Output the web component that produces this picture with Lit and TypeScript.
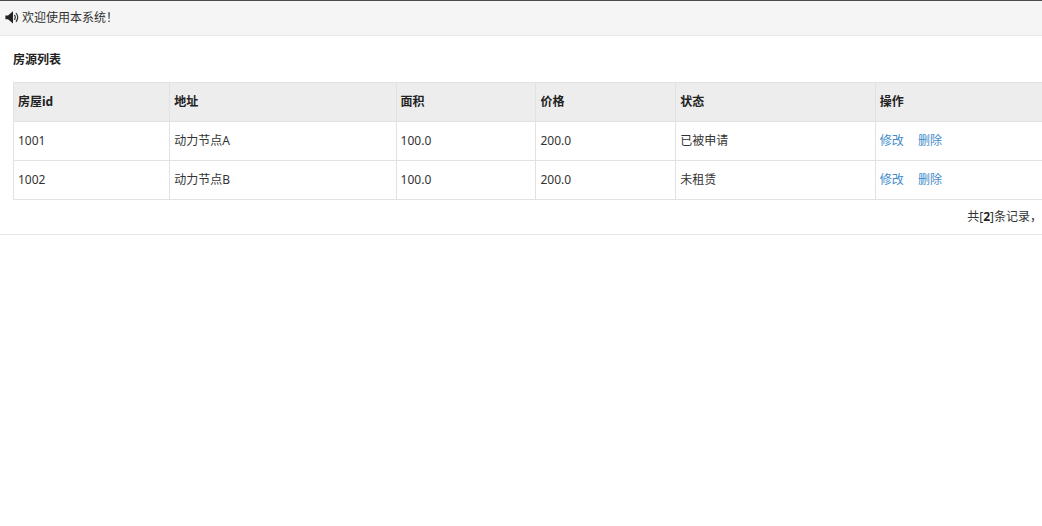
import { LitElement, html, css } from "lit";
import { customElement, state } from "lit/decorators.js";

interface House {
  id: number;
  address: string;
  area: string;
  price: string;
  status: string;
}

@customElement("app-root")
export class AppRoot extends LitElement {
  static styles = css`
    :host {
      display: block;
      overflow-x: hidden;
      background: #fff;
      color: #333;
      font: 12px/18px "Noto Sans", "Noto Sans CJK SC", sans-serif;
    }
    .welcome {
      display: flex;
      align-items: center;
      gap: 3px;
      height: 34px;
      padding-left: 5px;
      border-top: 1px solid #4c4a4f;
      border-bottom: 1px solid #e8e8e8;
      background: #f5f5f5;
    }
    .speaker {
      width: 14px;
      height: 14px;
      fill: #222;
    }
    .content {
      padding: 15px 0 0 13px;
    }
    .title {
      margin: 0 0 13px;
      font-size: 12px;
      line-height: 18px;
      font-weight: 700;
      color: #222;
    }
    .houses {
      width: 100%;
      table-layout: fixed;
      border-collapse: collapse;
      border: 1px solid #e2e2e2;
      border-right: 0;
    }
    .houses th,
    .houses td {
      height: 39px;
      box-sizing: border-box;
      padding: 0 4px;
      border: 1px solid #e2e2e2;
      text-align: left;
    }
    .houses th:last-child,
    .houses td:last-child {
      border-right: 0;
    }
    .houses th {
      background: #ededed;
      color: #222;
      font-weight: 700;
    }
    .id { width: 15.2%; }
    .address { width: 22%; }
    .area { width: 13.6%; }
    .price { width: 13.6%; }
    .status { width: 19.4%; }
    .actions {
      display: flex;
      gap: 14px;
    }
    a {
      color: #428bca;
      text-decoration: none;
    }
    .summary {
      padding: 8px 0;
      border-bottom: 1px solid #e8e8e8;
      text-align: right;
    }
    .summary strong {
      color: #222;
    }
  `;

  @state() private houses: House[] = [
    { id: 1001, address: "动力节点A", area: "100.0", price: "200.0", status: "已被申请" },
    { id: 1002, address: "动力节点B", area: "100.0", price: "200.0", status: "未租赁" },
  ];

  render() {
    return html`
      <header class="welcome">
        <svg class="speaker" viewBox="0 0 14 14" aria-hidden="true">
          <path d="M0.4 4.6H3L8 0.2V12.4L3 8.2H0.4Z" />
          <path
            d="M9.4 3.8Q11.2 6.3 9.4 8.8M11 2Q14.4 6.3 11 10.8"
            fill="none"
            stroke="#333"
            stroke-width="1.2"
          />
        </svg>
        <span>欢迎使用本系统！</span>
      </header>
      <main>
        <div class="content">
          <h1 class="title">房源列表</h1>
          <table class="houses">
            <thead>
              <tr>
                <th class="id">房屋id</th>
                <th class="address">地址</th>
                <th class="area">面积</th>
                <th class="price">价格</th>
                <th class="status">状态</th>
                <th>操作</th>
              </tr>
            </thead>
            <tbody>
              ${this.houses.map(
                (h) => html`<tr>
                  <td>${h.id}</td>
                  <td>${h.address}</td>
                  <td>${h.area}</td>
                  <td>${h.price}</td>
                  <td>${h.status}</td>
                  <td>
                    <div class="actions"><a href="#edit">修改</a><a href="#delete">删除</a></div>
                  </td>
                </tr>`
              )}
            </tbody>
          </table>
        </div>
        <div class="summary">共[<strong>${this.houses.length}</strong>]条记录，</div>
      </main>
    `;
  }
}
